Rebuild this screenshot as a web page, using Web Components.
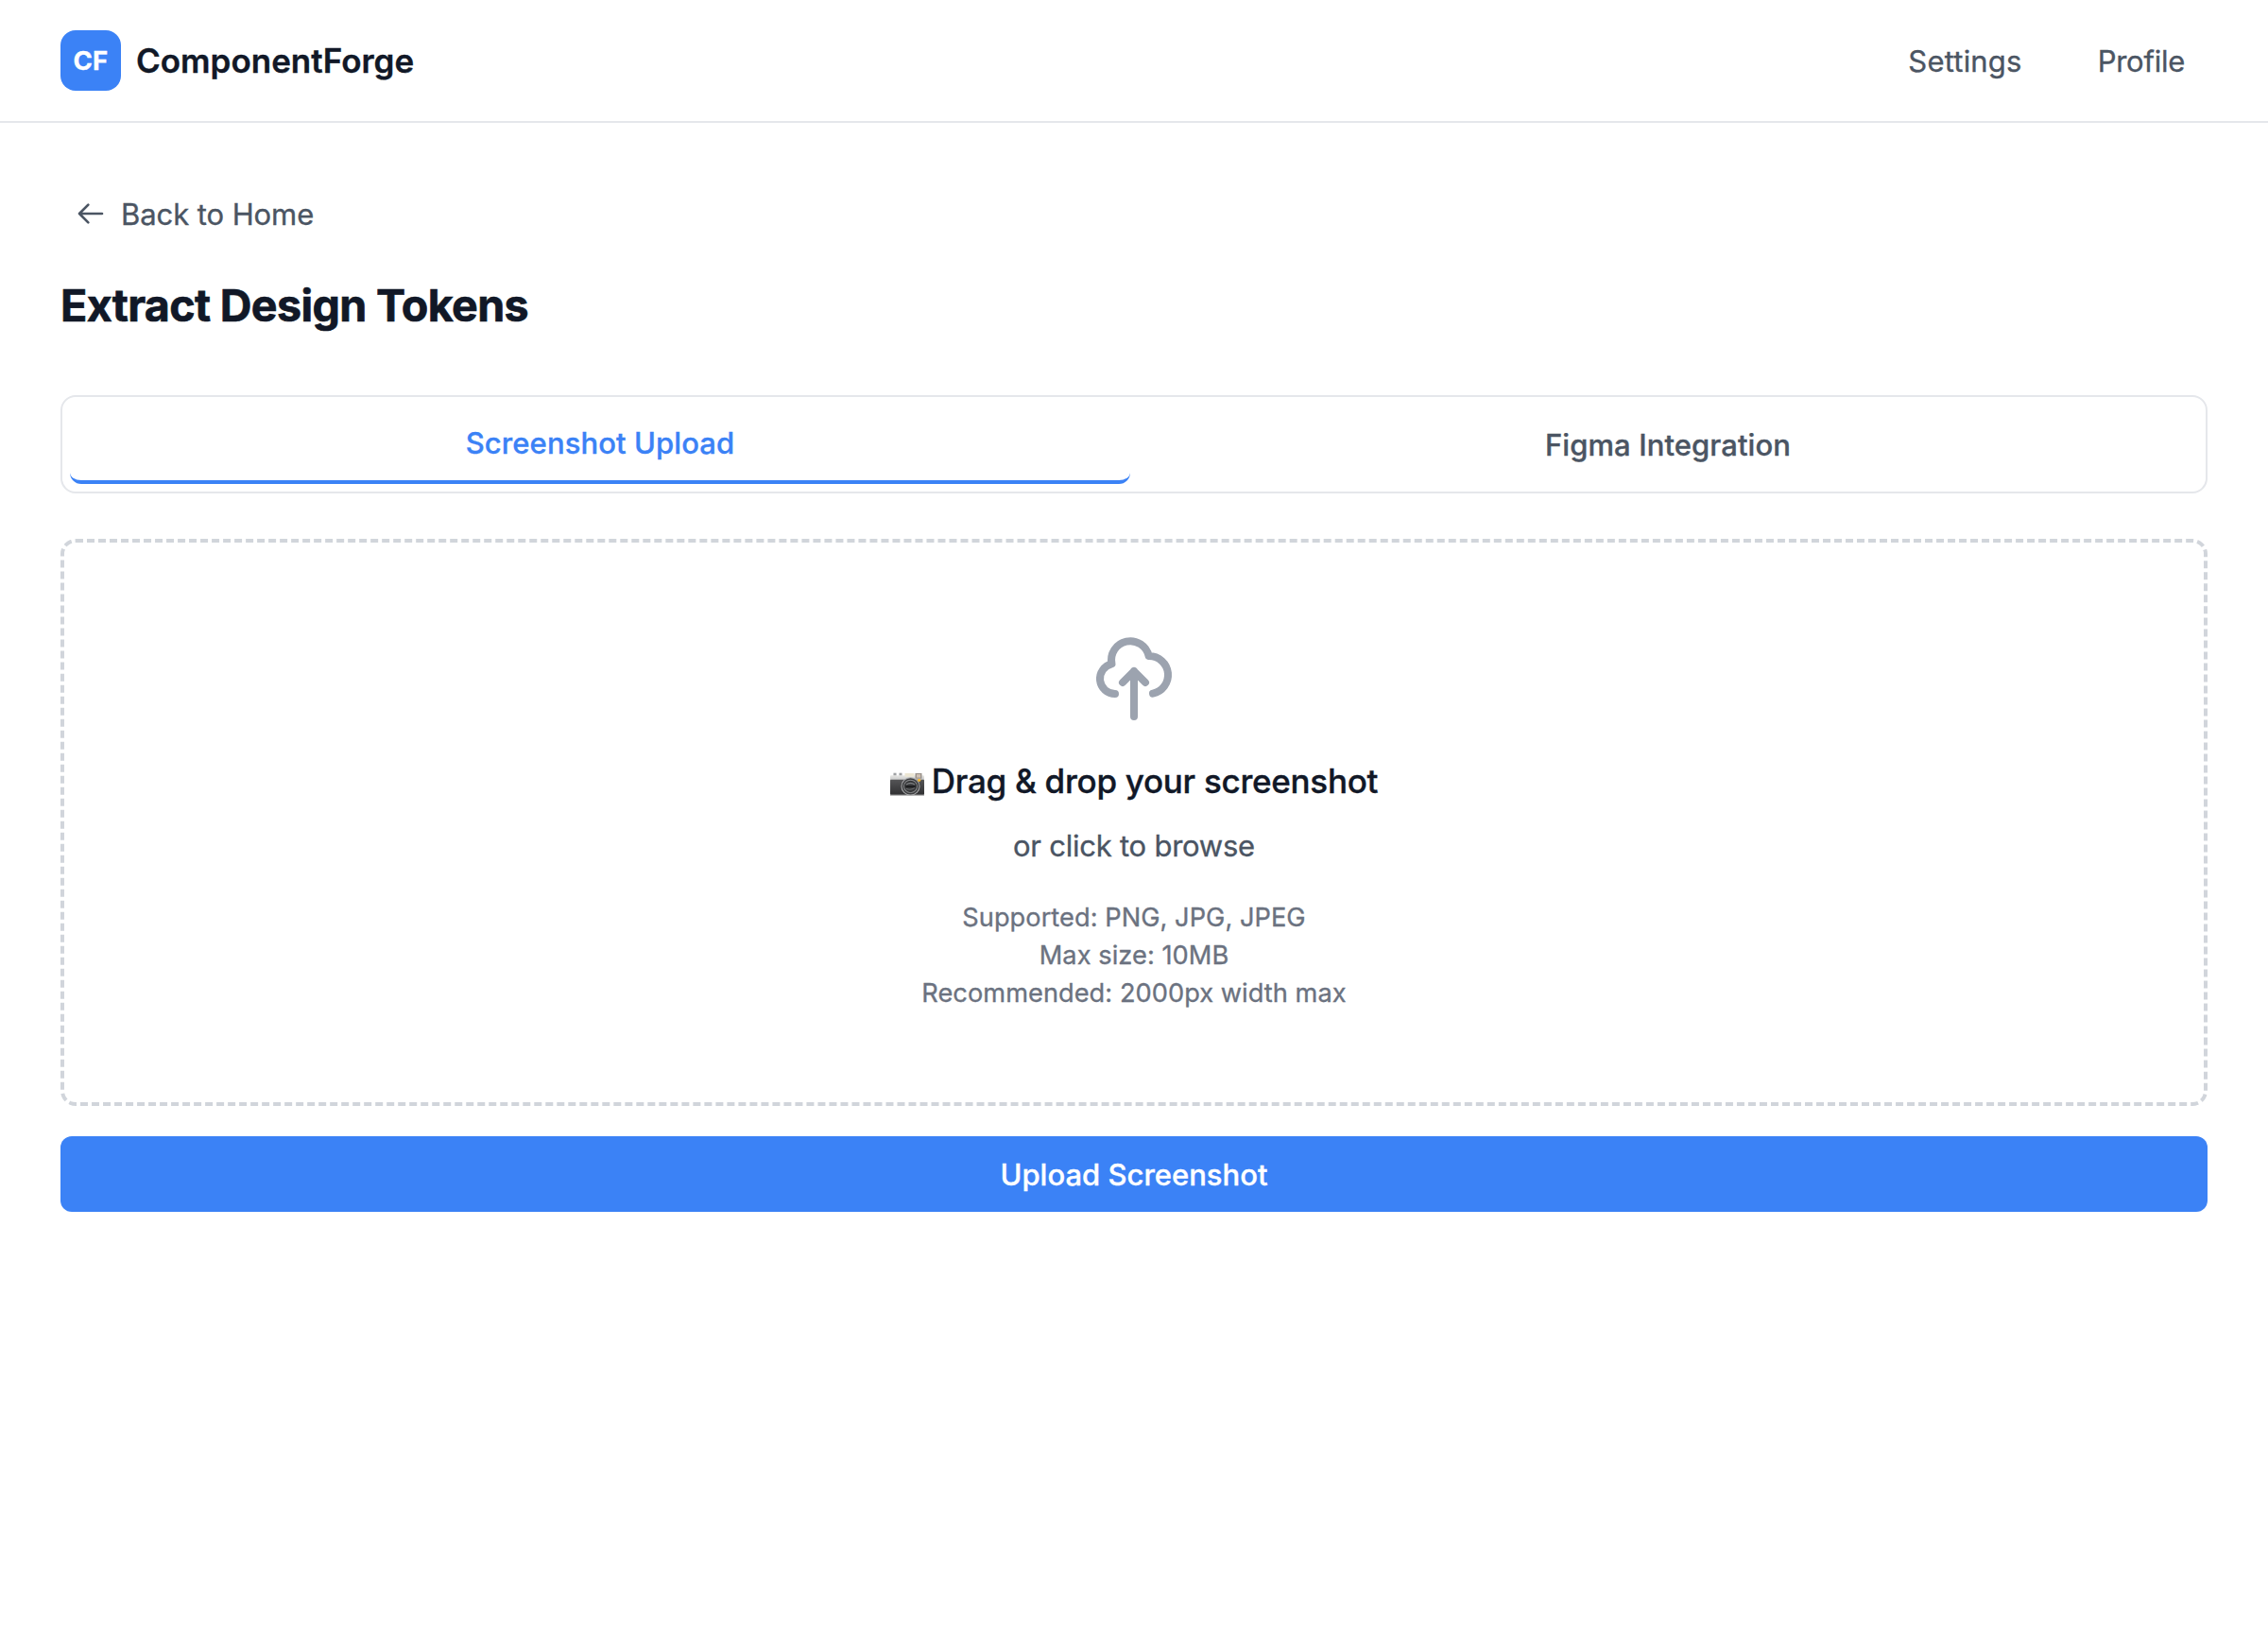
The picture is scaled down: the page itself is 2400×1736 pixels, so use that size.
<!DOCTYPE html>
<html lang="en">
<head>
<meta charset="utf-8">
<title>ComponentForge</title>
<style>
  html, body { margin: 0; background: #fff; }
  body { min-height: 1736px; font-family: Inter, "Liberation Sans", sans-serif; color: #111827; -webkit-text-stroke: 0.35px currentColor; }
</style>
</head>
<body>
<cf-app></cf-app>

<template id="t-app">
  <style>
    :host { display: flex; flex-direction: column; }
    main { display: flex; flex-direction: column; align-items: stretch; padding: 72px 64px 0; }
    cf-back { align-self: flex-start; }
    h1 { margin: 41px 0 63px; font-size: 46.6px; line-height: 64px; font-weight: 700; letter-spacing: -0.642px; -webkit-text-stroke: 0.7px currentColor; }
    cf-dropzone { margin-top: 48px; }
    cf-button { margin-top: 32px; }
  </style>
  <cf-header></cf-header>
  <main>
    <cf-back>Back to Home</cf-back>
    <h1>Extract Design Tokens</h1>
    <cf-tabs>
      <cf-tab active>Screenshot Upload</cf-tab>
      <cf-tab>Figma Integration</cf-tab>
    </cf-tabs>
    <cf-dropzone></cf-dropzone>
    <cf-button>Upload Screenshot</cf-button>
  </main>
</template>

<template id="t-header">
  <style>
    :host { display: flex; align-items: center; justify-content: space-between; height: 128px; padding: 0 64px; border-bottom: 2px solid #e5e7eb; }
    .brand { display: flex; align-items: center; gap: 16px; }
    .logo { display: flex; align-items: center; justify-content: center; width: 64px; height: 64px; border-radius: 16px; background: #3b82f6; color: #fff; font-size: 27.5px; font-weight: 700; letter-spacing: 0.2px; }
    .name { font-size: 35px; font-weight: 600; letter-spacing: 0; }
    nav { display: flex; gap: 32px; }
  </style>
  <div class="brand"><div class="logo">CF</div><div class="name">ComponentForge</div></div>
  <nav><cf-nav-link style="letter-spacing:0.2px">Settings</cf-nav-link><cf-nav-link style="letter-spacing:-0.25px">Profile</cf-nav-link></nav>
</template>

<template id="t-nav-link">
  <style>:host { display: block; padding: 2px 24px 0; font-size: 31px; line-height: 48px; color: #4b5563; }</style>
  <slot></slot>
</template>

<template id="t-back">
  <style>
    :host { display: flex; align-items: center; gap: 16px; padding: 0 16px; height: 48px; font-size: 31px; line-height: 48px; letter-spacing: -0.08px; color: #4b5563; }
    svg { width: 32px; height: 32px; }
    span { padding-top: 2px; }
  </style>
  <svg viewBox="0 0 24 24" fill="none" stroke="currentColor" stroke-width="2" stroke-linecap="round" stroke-linejoin="round"><path d="M10 19l-7-7m0 0l7-7m-7 7h18"/></svg>
  <span><slot></slot></span>
</template>

<template id="t-tabs">
  <style>:host { display: flex; gap: 8px; height: 84px; padding: 8px; border: 2px solid #e5e7eb; border-radius: 16px; }</style>
  <slot></slot>
</template>

<template id="t-tab">
  <style>
    :host { display: flex; flex: 1 1 0; align-items: center; justify-content: center; box-sizing: border-box; border-radius: 12px; font-size: 31px; line-height: 48px; font-weight: 500; letter-spacing: 0.09px; color: #4b5563; }
    :host([active]) { color: #3b82f6; border-bottom: 4px solid #3b82f6; }
    span { padding-top: 2px; }
  </style>
  <span><slot></slot></span>
</template>

<template id="t-dropzone">
  <style>
    :host { display: flex; flex-direction: column; align-items: center; box-sizing: border-box; height: 600px; padding-top: 96px; border: 4px dashed #d1d5db; border-radius: 16px; text-align: center; }
    .cloud { width: 96px; height: 96px; color: #9ca3af; }
    .title { display: flex; align-items: center; margin-top: 32px; gap: 8px; font-size: 35px; line-height: 56px; font-weight: 500; letter-spacing: -0.28px; }
    .camera { width: 36px; height: 25px; margin-top: 6px; }
    .browse { margin-top: 17px; font-size: 31px; line-height: 48px; letter-spacing: -0.24px; color: #4b5563; }
    .notes { margin-top: 32px; font-size: 27.2px; line-height: 40px; letter-spacing: 0.05px; color: #6b7280; }
  </style>
  <svg class="cloud" viewBox="0 0 24 24" fill="none" stroke="currentColor" stroke-width="2" stroke-linecap="round" stroke-linejoin="round"><path d="M7 16a4 4 0 01-.88-7.903A5 5 0 1115.9 6L16 6a5 5 0 011 9.9M15 13l-3-3m0 0l-3 3m3-3v12"/></svg>
  <div class="title">
    <svg class="camera" viewBox="0 0 36 26" preserveAspectRatio="none">
      <defs>
        <linearGradient id="top" x1="0" y1="0" x2="0" y2="1"><stop offset="0" stop-color="#e6e6e4"/><stop offset="1" stop-color="#bcbdbe"/></linearGradient>
        <linearGradient id="body" x1="0" y1="0" x2="0" y2="1"><stop offset="0" stop-color="#555557"/><stop offset="1" stop-color="#2f2f31"/></linearGradient>
      </defs>
      <rect x="3" y="0.5" width="4" height="4" rx="1" fill="#c9cacc"/><rect x="9" y="0.5" width="4" height="4" rx="1" fill="#c9cacc"/>
      <rect x="4.5" y="1" width="1" height="3" fill="#77787a"/><rect x="10.5" y="1" width="1" height="3" fill="#77787a"/>
      <rect x="0" y="3.5" width="36" height="7" rx="1" fill="url(#top)"/>
      <rect x="0" y="8" width="36" height="17" rx="0.8" fill="url(#body)"/>
      <rect x="0" y="24.6" width="36" height="1.4" fill="#b7b7b7"/>
      <rect x="15.5" y="1" width="10" height="4" rx="0.6" fill="#ece6d3"/>
      <rect x="26.5" y="1" width="7" height="6" fill="#9a938c"/><rect x="28" y="2.2" width="4" height="3.6" fill="#cfc0b2"/>
      <circle cx="21.5" cy="15.5" r="10" fill="#a7a8aa"/>
      <circle cx="21.5" cy="15.5" r="9" fill="#3e3f41"/>
      <circle cx="21.5" cy="15.5" r="7.4" fill="#8a8b8d"/>
      <circle cx="21.5" cy="15.5" r="6.5" fill="#37383a"/>
      <path d="M17 13.5q4.500-3 9 0" fill="none" stroke="#7c7e80" stroke-width="1.4"/>
      <path d="M17 18q4.500 2.400 9-1" fill="none" stroke="#68696b" stroke-width="1.2"/>
      <path d="M16.500 15.800h10" stroke="#17181a" stroke-width="1.6"/>
      <circle cx="30.700" cy="8.700" r="1.6" fill="#f5b932"/>
    </svg>
    <span>Drag &amp; drop your screenshot</span>
  </div>
  <div class="browse">or click to browse</div>
  <div class="notes"><div>Supported: PNG, JPG, JPEG</div><div>Max size: 10MB</div><div>Recommended: 2000px width max</div></div>
</template>

<template id="t-button">
  <style>
    :host { display: flex; align-items: center; justify-content: center; height: 80px; border-radius: 12px; background: #3b82f6; color: #fff; font-size: 31px; line-height: 48px; font-weight: 500; letter-spacing: 0; }
    span { padding-top: 2px; }
  </style>
  <span><slot></slot></span>
</template>

<script>
  for (const name of ['nav-link', 'header', 'back', 'tab', 'tabs', 'dropzone', 'button', 'app']) {
    customElements.define('cf-' + name, class extends HTMLElement {
      constructor() {
        super();
        this.attachShadow({ mode: 'open' }).append(document.getElementById('t-' + name).content.cloneNode(true));
      }
    });
  }
</script>
</body>
</html>
